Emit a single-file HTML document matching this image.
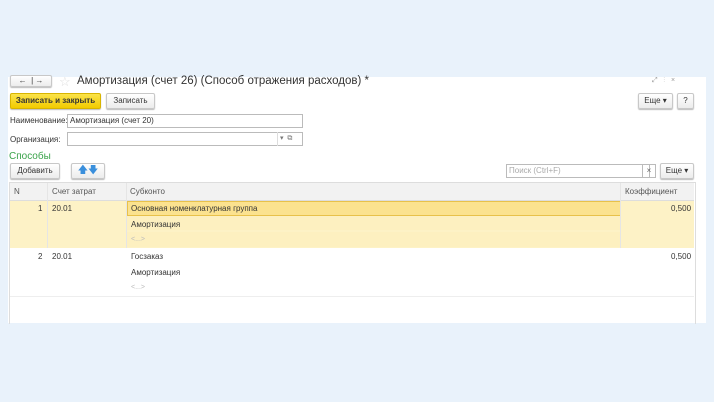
<html><head><style>
body{margin:0;width:714px;height:402px;background:#e9f2fb;font-family:"Liberation Sans",sans-serif;font-size:8px;color:#333;position:relative;overflow:hidden}
.a{position:absolute}
.p{left:8px;top:77px;width:698px;height:246px;background:#fff}
.btn{position:absolute;height:14px;border:1px solid #c8c8c8;border-radius:2px;background:linear-gradient(#fff,#ececec);box-shadow:0 1px 1px #bbb;font-size:8px;line-height:14px;text-align:center;color:#333}
.inp{position:absolute;height:12px;border:1px solid #bbb;background:#fff;font-size:8px;line-height:12px;padding-left:2px}
.c{position:absolute;font-size:8px}
</style></head><body>
<div class="a p"></div>
<div class="btn" style="left:10px;top:75px;width:40px;height:10px;line-height:10px">←&nbsp;&nbsp;|&nbsp;→</div>
<div class="a" style="left:59px;top:74px;color:#ddd;font-size:13px">☆</div>
<div class="a" style="left:77px;top:75px;font-size:11.5px;color:#333">Амортизация (счет 26) (Способ отражения расходов) *</div>
<div class="a" style="left:652px;top:77px;font-size:7px;color:#999">⤢&nbsp;&nbsp;&nbsp;⋮&nbsp;&nbsp;&nbsp;×</div>
<div class="btn" style="left:10px;top:93px;width:89px;background:linear-gradient(#fbe34a,#f2cb00);border-color:#d8b400;font-weight:bold">Записать и закрыть</div>
<div class="btn" style="left:106px;top:93px;width:47px">Записать</div>
<div class="btn" style="left:638px;top:93px;width:33px">Еще ▾</div>
<div class="btn" style="left:677px;top:93px;width:15px">?</div>
<div class="c" style="left:10px;top:116px">Наименование:</div>
<div class="inp" style="left:67px;top:114px;width:232px">Амортизация (счет 20)</div>
<div class="c" style="left:10px;top:135px">Организация:</div>
<div class="inp" style="left:67px;top:132px;width:232px"></div>
<div class="a" style="left:277px;top:132px;height:14px;border-left:1px solid #ddd;width:24px;font-size:7px;color:#777;line-height:14px">&nbsp;▾&nbsp;&nbsp;⧉</div>
<div class="a" style="left:9px;top:151px;font-size:10px;color:#3aa34a">Способы</div>
<div class="btn" style="left:10px;top:163px;width:48px">Добавить</div>
<div class="btn" style="left:71px;top:163px;width:32px;color:#3a8fdc;font-size:10px">🡅🡇</div>
<div class="inp" style="left:506px;top:164px;width:140px;color:#aaa">Поиск (Ctrl+F)</div>
<div class="a" style="left:642px;top:164px;width:12px;height:12px;border:1px solid #bbb;text-align:center;line-height:12px;color:#666">×</div>
<div class="btn" style="left:660px;top:163px;width:32px">Еще ▾</div>
<div class="a" style="left:9px;top:182px;width:685px;height:141px;border:1px solid #ddd;border-bottom:none"></div>
<div class="a" style="left:10px;top:183px;width:684px;height:17px;background:#f2f2f2;border-bottom:1px solid #ddd"></div>
<div class="a" style="left:10px;top:201px;width:684px;height:47px;background:#fdf2c6"></div>
<div class="a" style="left:127px;top:201px;width:492px;height:13px;background:#fbe28f;border:1px solid #e8c14a"></div>
<div class="a" style="left:127px;top:216px;width:494px;height:14px;background:#fdf0c0"></div>
<div class="a" style="left:127px;top:232px;width:494px;height:15px;background:#fdf0c0"></div>
<div class="a" style="left:10px;top:296px;width:684px;border-top:1px solid #eee"></div>
<div class="a" style="left:47px;top:183px;height:65px;border-left:1px solid #e5e5e5"></div>
<div class="a" style="left:126px;top:183px;height:65px;border-left:1px solid #e5e5e5"></div>
<div class="a" style="left:620px;top:183px;height:65px;border-left:1px solid #e5e5e5"></div>
<div class="c" style="left:14px;top:187px;color:#555">N</div>
<div class="c" style="left:52px;top:187px;color:#555">Счет затрат</div>
<div class="c" style="left:130px;top:187px;color:#555">Субконто</div>
<div class="c" style="left:625px;top:187px;color:#555">Коэффициент</div>
<div class="c" style="left:38px;top:204px">1</div>
<div class="c" style="left:52px;top:204px">20.01</div>
<div class="c" style="left:131px;top:204px">Основная номенклатурная группа</div>
<div class="c" style="left:671px;top:204px">0,500</div>
<div class="c" style="left:131px;top:220px">Амортизация</div>
<div class="c" style="left:131px;top:236px;color:#bbb;font-size:7px">&lt;...&gt;</div>
<div class="c" style="left:38px;top:252px">2</div>
<div class="c" style="left:52px;top:252px">20.01</div>
<div class="c" style="left:131px;top:252px">Госзаказ</div>
<div class="c" style="left:671px;top:252px">0,500</div>
<div class="c" style="left:131px;top:268px">Амортизация</div>
<div class="c" style="left:131px;top:284px;color:#bbb;font-size:7px">&lt;...&gt;</div>
</body></html>
